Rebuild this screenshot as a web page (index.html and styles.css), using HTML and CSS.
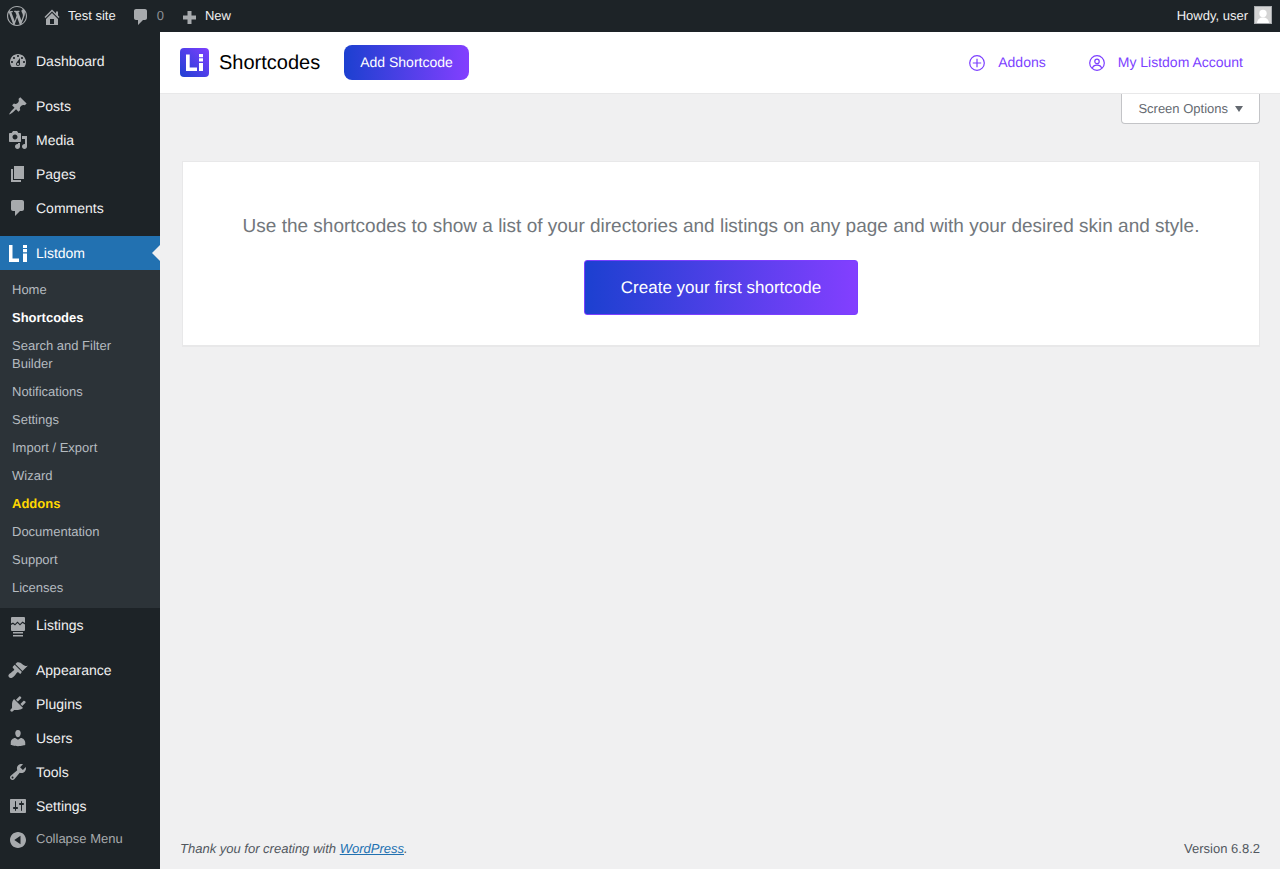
FILE: index.html
```html
<!DOCTYPE html>
<html lang="en">
<head>
<meta charset="utf-8">
<title>Shortcodes</title>
<link rel="stylesheet" href="styles.css">
</head>
<body>
<header class="adminbar">
  <svg class="bar-logo" viewBox="0 0 20 20"><path d="M20 10c0-5.51-4.49-10-10-10C4.48 0 0 4.49 0 10c0 5.52 4.48 10 10 10 5.51 0 10-4.48 10-10zM7.78 15.37L4.37 6.22c.55-.02 1.17-.08 1.17-.08.5-.06.44-1.13-.06-1.11 0 0-1.45.11-2.37.11-.18 0-.37 0-.58-.01C4.12 2.69 6.87 1.11 10 1.11c2.33 0 4.45.87 6.05 2.34-.68-.11-1.65.39-1.65 1.58 0 .74.45 1.36.9 2.1.35.61.55 1.36.55 2.46 0 1.49-1.4 5-1.4 5l-3.03-8.37c.54-.02.82-.17.82-.17.5-.05.44-1.25-.06-1.22 0 0-1.44.12-2.38.12-.87 0-2.33-.12-2.33-.12-.5-.03-.56 1.2-.06 1.22l.92.08 1.26 3.41zM17.41 10c.24-.64.74-1.87.43-4.25.7 1.29 1.05 2.71 1.05 4.25 0 3.29-1.73 6.24-4.4 7.78.97-2.59 1.94-5.2 2.92-7.78zM6.1 18.09C3.12 16.65 1.11 13.53 1.11 10c0-1.3.23-2.48.72-3.59C3.25 10.3 4.67 14.2 6.1 18.09zm4.03-6.63l2.58 6.98c-.86.29-1.76.45-2.71.45-.79 0-1.57-.11-2.29-.33.81-2.38 1.62-4.74 2.42-7.1z"/></svg>
  <a class="bar-item bar-site"><svg class="bar-icon" viewBox="0 0 20 20"><path d="M16 8.5l1.53 1.53-1.06 1.06L10 4.62l-6.47 6.47-1.06-1.06L10 2.5l4 4v-2h2v4zm-6-2.46l6 5.99V18H4v-5.97zM12 17v-5H8v5h4z"/></svg><span>Test site</span></a>
  <a class="bar-item bar-comments"><svg class="bar-icon" viewBox="0 0 20 20"><path d="M5 2h9c1.1 0 2 .9 2 2v7c0 1.1-.9 2-2 2h-2l-5 5v-5H5c-1.1 0-2-.9-2-2V4c0-1.1.9-2 2-2z"/></svg><span class="bar-count">0</span></a>
  <a class="bar-item bar-new"><svg class="bar-icon" viewBox="0 0 20 20"><path d="M2 8.5h4.500V4h4v4.500H15v4h-4.500V17h-4v-4.500H2z"/></svg><span>New</span></a>
  <a class="bar-user"><span>Howdy, user</span>
    <svg class="avatar" viewBox="0 0 18 18"><rect width="18" height="18" fill="#a7aaad"/><rect x="1" y="1" width="16" height="16" fill="#d4d4d4"/><circle cx="9" cy="7.500" r="3.700" fill="#fff"/><path d="M3 17c.5-4 3-5.500 6-5.500s5.500 1.500 6 5.500z" fill="#fff"/></svg>
  </a>
</header>

<div class="layout">
  <nav class="sidebar">
    <a class="menu-item"><span class="mi"><svg viewBox="0 0 20 20"><path d="M3.76 16h12.48c1.100-1.370 1.760-3.110 1.760-5 0-4.420-3.580-8-8-8s-8 3.580-8 8c0 1.890.66 3.630 1.760 5zM10 4c.55 0 1 .45 1 1s-.45 1-1 1-1-.45-1-1 .45-1 1-1zM6 6c.55 0 1 .45 1 1s-.45 1-1 1-1-.45-1-1 .45-1 1-1zm8 0c.55 0 1 .45 1 1s-.45 1-1 1-1-.45-1-1 .45-1 1-1zm-5.370 5.550L12 7v6c0 1.100-.9 2-2 2s-2-.9-2-2c0-.57.24-1.080.63-1.450zM4 10c.55 0 1 .45 1 1s-.45 1-1 1-1-.45-1-1 .45-1 1-1zm12 0c.55 0 1 .45 1 1s-.45 1-1 1-1-.45-1-1 .45-1 1-1zm-5 3c0-.55-.45-1-1-1s-1 .45-1 1 .45 1 1 1 1-.45 1-1z" fill-rule="evenodd"/></svg></span>Dashboard</a>
    <div class="menu-sep"></div>
    <a class="menu-item"><span class="mi"><svg viewBox="0 0 20 20"><path d="M10.44 3.020l1.820-1.820 6.360 6.350-1.830 1.820c-1.050-.68-2.480-.57-3.410.36l-.75.75c-.92.93-1.040 2.350-.35 3.410l-1.830 1.820-2.410-2.410-2.800 2.790c-.42.42-3.380 2.710-3.800 2.290s1.860-3.390 2.280-3.810l2.790-2.790L4.100 9.360l1.830-1.820c1.050.69 2.480.57 3.400-.36l.75-.75c.93-.92 1.050-2.350.36-3.410z"/></svg></span>Posts</a>
    <a class="menu-item"><span class="mi"><svg viewBox="0 0 20 20"><path fill-rule="evenodd" d="M13 11V4c0-.55-.45-1-1-1h-1.670L9 1H5L3.670 3H2c-.55 0-1 .45-1 1v7c0 .55.45 1 1 1h10c.55 0 1-.45 1-1zM7 4.500c1.380 0 2.500 1.120 2.500 2.500S8.380 9.500 7 9.500 4.500 8.380 4.500 7 5.620 4.500 7 4.500zM14 6h5v10.500c0 1.380-1.120 2.500-2.500 2.500S14 17.880 14 16.500s1.120-2.500 2.500-2.500c.17 0 .34.02.5.05V9h-3V6zm-4 8.050V13h2v3.500c0 1.380-1.120 2.500-2.500 2.500S7 17.880 7 16.500 8.120 14 9.500 14c.17 0 .34.02.5.05z"/></svg></span>Media</a>
    <a class="menu-item"><span class="mi"><svg viewBox="0 0 20 20"><path d="M6 15V2h10v13H6zm-1 1h8v2H3V5h2v11z"/></svg></span>Pages</a>
    <a class="menu-item"><span class="mi"><svg viewBox="0 0 20 20"><path d="M5 2h9c1.100 0 2 .9 2 2v7c0 1.100-.9 2-2 2h-2l-5 5v-5H5c-1.100 0-2-.9-2-2V4c0-1.100.9-2 2-2z"/></svg></span>Comments</a>
    <div class="menu-sep"></div>
    <a class="menu-item is-active"><span class="mi"><svg viewBox="0 0 20 20"><path d="M1 2h3.500v13.500H11V19H1zM15 2h4v3h-4zM15 6h4v3.200h-4zM15 10.500h4V19h-4z"/></svg></span>Listdom</a>
    <ul class="submenu">
      <li>Home</li>
      <li class="is-current">Shortcodes</li>
      <li>Search and Filter Builder</li>
      <li>Notifications</li>
      <li>Settings</li>
      <li>Import / Export</li>
      <li>Wizard</li>
      <li class="is-gold">Addons</li>
      <li>Documentation</li>
      <li>Support</li>
      <li>Licenses</li>
    </ul>
    <a class="menu-item"><span class="mi mi-tall"><svg viewBox="0 0 20 20"><path d="M4 2h12a1 1 0 0 1 1 1v5l-2.500-1.500L12 9 9.500 6.500 7 9 5 7.500 3 8.500V3a1 1 0 0 1 1-1zM3 10l2-1 2 1.500L9.500 8l2.500 2.500L14.500 8l2.500 1.500V15a1 1 0 0 1-1 1H4a1 1 0 0 1-1-1zM5 17h10v1.600H5zM5 20h10v1.600H5z"/></svg></span>Listings</a>
    <div class="menu-sep"></div>
    <a class="menu-item"><span class="mi"><svg viewBox="0 0 20 20"><path d="M14.480 11.060L7.410 3.990l1.500-1.500c.5-.56 2.300-.47 3.510.32 1.210.8 1.430 1.280 2.910 2.100 1.180.64 2.450 1.260 4.450.85zm-.71.71L6.700 4.700 4.930 6.470c-.39.39-.39 1.020 0 1.410l1.060 1.060c.39.39.39 1.030 0 1.420-.6.6-1.430 1.110-2.210 1.690-.35.26-.7.53-1.010.84C1.430 13.230.39 14.750.39 15.800c0 1.080 1.190 2.260 2.260 2.260 1.080 0 2.570-1.020 3.920-2.380.31-.31.58-.66.84-1.010.58-.78 1.090-1.610 1.690-2.210.39-.39 1.020-.39 1.410 0l1.060 1.060c.39.39 1.020.39 1.410 0z"/></svg></span>Appearance</a>
    <a class="menu-item"><span class="mi"><svg viewBox="0 0 20 20"><path d="M13.110 4.360L9.870 7.600 8 5.730l3.240-3.240c.35-.34 1.050-.2 1.560.32.52.51.66 1.210.31 1.550zm-8 1.770l.91-1.120 9.010 9.010-1.190.84c-.71.71-2.630 1.160-3.820 1.160H6.140L4.900 17.260c-.59.59-1.540.59-2.120 0-.59-.58-.59-1.530 0-2.120l1.240-1.240v-3.880c0-1.130.4-3.190 1.090-3.890zm7.260 3.970l3.240-3.240c.34-.35 1.040-.21 1.550.31.52.51.66 1.210.31 1.550l-3.240 3.250z"/></svg></span>Plugins</a>
    <a class="menu-item"><span class="mi"><svg viewBox="0 0 20 20"><path d="M10 9.250c-2.270 0-2.730-3.440-2.730-3.440C7 4.020 7.820 2 9.970 2c2.160 0 2.980 2.020 2.710 3.810 0 0-.41 3.440-2.680 3.440zm0 2.570L12.720 10c2.390 0 4.520 2.330 4.520 4.530v2.490s-3.650 1.130-7.240 1.130c-3.650 0-7.240-1.130-7.240-1.130v-2.490c0-2.250 1.940-4.480 4.470-4.480z"/></svg></span>Users</a>
    <a class="menu-item"><span class="mi"><svg viewBox="0 0 20 20"><path fill-rule="evenodd" d="M16.680 9.770c-1.340 1.340-3.300 1.670-4.950.99l-5.410 6.520c-.99.99-2.590.99-3.580 0s-.99-2.590 0-3.570l6.520-5.420c-.68-1.650-.35-3.610.99-4.950 1.280-1.280 3.120-1.620 4.720-1.060l-2.890 2.890 2.820 2.820 2.860-2.870c.53 1.580.18 3.390-1.080 4.650zM3.810 16.210c.4.39 1.040.39 1.430 0 .4-.4.4-1.040 0-1.430-.39-.4-1.030-.4-1.430 0-.39.39-.39 1.030 0 1.430z"/></svg></span>Tools</a>
    <a class="menu-item"><span class="mi"><svg viewBox="0 0 20 20"><path fill-rule="evenodd" d="M18 16V4c0-.55-.45-1-1-1H3c-.55 0-1 .45-1 1v12c0 .55.45 1 1 1h14c.55 0 1-.45 1-1zM8 11h1c.55 0 1 .45 1 1s-.45 1-1 1H8v1.500c0 .28-.22.5-.5.5s-.5-.22-.5-.5V13H6c-.55 0-1-.45-1-1s.45-1 1-1h1V5.500c0-.28.22-.5.5-.5s.5.22.5.5V11zm5-2h-1c-.55 0-1-.45-1-1s.45-1 1-1h1V5.500c0-.28.22-.5.5-.5s.5.22.5.5V7h1c.55 0 1 .45 1 1s-.45 1-1 1h-1v5.500c0 .28-.22.5-.5.5s-.5-.22-.5-.5V9z"/></svg></span>Settings</a>
    <a class="menu-item menu-collapse"><span class="mi"><svg viewBox="0 0 20 20"><path fill-rule="evenodd" d="M10 2c4.420 0 8 3.580 8 8s-3.580 8-8 8-8-3.580-8-8 3.580-8 8-8zm2.500 3.800L6.300 10l6.200 4.200z"/></svg></span>Collapse Menu</a>
  </nav>

  <main class="content">
    <div class="page-header">
      <svg class="brand" viewBox="0 0 29 29">
        <defs><linearGradient id="brand-grad" x1="0" y1="1" x2="1" y2="0"><stop offset="0" stop-color="#1e40d2"/><stop offset="1" stop-color="#7f3fff"/></linearGradient></defs>
        <rect width="29" height="29" rx="4" fill="url(#brand-grad)"/>
        <path d="M6 6.500h3.700v13H17V23H6zM19 6h4v3.300h-4zM19 10.200h4v3.300h-4zM19 15h4v8h-4z" fill="#fff"/>
      </svg>
      <h1 class="page-title">Shortcodes</h1>
      <a class="btn-add">Add Shortcode</a>
      <div class="header-links">
        <a class="header-link"><svg viewBox="0 0 16 16"><circle cx="8" cy="8" r="7.300"/><path d="M8 3.800v8.400M3.800 8h8.400"/></svg><span>Addons</span></a>
        <a class="header-link"><svg viewBox="0 0 16 16"><circle cx="8" cy="8" r="7.300"/><circle cx="8" cy="6.400" r="2.200"/><path d="M3.400 13.200c.6-2.300 2.500-3 4.600-3s4 .7 4.600 3"/></svg><span>My Listdom Account</span></a>
      </div>
    </div>
    <div class="screen-row">
      <a class="screen-options">Screen Options<i class="caret"></i></a>
    </div>
    <section class="card">
      <p class="card-text">Use the shortcodes to show a list of your directories and listings on any page and with your desired skin and style.</p>
      <a class="btn-create">Create your first shortcode</a>
    </section>
    <footer class="footer">
      <span class="thanks">Thank you for creating with <a>WordPress</a>.</span>
      <span>Version 6.8.2</span>
    </footer>
  </main>
</div>
</body>
</html>
```

FILE: styles.css
```css
* { box-sizing: border-box; }
html, body { height: 100%; }
body {
  margin: 0;
  overflow: hidden;
  background: #f0f0f1;
  color: #3c434a;
  font: 13px/1.4 "Liberation Sans", Arial, sans-serif;
  text-rendering: geometricPrecision;
}
a { text-decoration: none; color: inherit; }

/* Admin bar */
.adminbar {
  display: flex;
  align-items: center;
  height: 32px;
  padding: 0 8px 0 7px;
  background: #1d2327;
  color: #f0f0f1;
  fill: #a7aaad;
  line-height: 32px;
}
.bar-logo { width: 20px; height: 20px; flex: none; }
.bar-item { display: flex; align-items: center; }
.bar-icon { width: 20px; height: 20px; flex: none; margin-top: 2px; }
.bar-site { margin-left: 15px; gap: 6px; }
.bar-comments { margin-left: 15px; gap: 6px; }
.bar-count { color: #8c8f94; }
.bar-new { margin-left: 17px; gap: 4px; }
.bar-user { display: flex; align-items: center; gap: 6px; margin-left: auto; }
.avatar { width: 18px; height: 18px; flex: none; margin-top: -2px; }

/* Layout */
.layout { display: flex; height: calc(100% - 32px); }

/* Sidebar */
.sidebar {
  flex: none;
  width: 160px;
  padding-top: 12px;
  background: #1d2327;
  color: #f0f0f1;
}
.menu-item {
  position: relative;
  display: flex;
  align-items: center;
  height: 34px;
  font-size: 14px;
  line-height: 18px;
}
.mi { display: flex; flex: none; width: 36px; padding-left: 8px; }
.mi svg { width: 20px; height: 20px; fill: #a7aaad; }
.mi-tall svg { overflow: visible; }
.menu-sep { height: 11px; }
.is-active { background: #2271b1; color: #fff; }
.is-active .mi svg { fill: #fff; }
.is-active::after {
  content: "";
  position: absolute;
  right: 0;
  top: 9px;
  border: 8px solid transparent;
  border-left: 0;
  border-right-color: #f0f0f1;
}
.submenu {
  margin: 0;
  padding: 6px 0;
  list-style: none;
  background: #2c3338;
  color: #b5bbc0;
  line-height: 18px;
}
.submenu li { padding: 5px 12px; }
.submenu .is-current { color: #fff; font-weight: 700; }
.submenu .is-gold { color: #ffd700; font-weight: 700; }
.menu-collapse { height: 32px; font-size: 13px; color: #a7aaad; }
.menu-collapse svg { margin-top: 2px; }

/* Content */
.content { display: flex; flex: 1; flex-direction: column; min-width: 0; }
.page-header {
  display: flex;
  flex: none;
  align-items: center;
  height: 62px;
  padding: 0 37px 0 20px;
  background: #fff;
  border-bottom: 1px solid #e8e8e9;
}
.brand { flex: none; width: 29px; height: 29px; }
.page-title {
  margin: 0 0 0 10px;
  color: #000;
  font-size: 20px;
  font-weight: 400;
  line-height: 28px;
}
.btn-add {
  margin-left: 24px;
  margin-bottom: 1px;
  padding: 0 16px;
  border-radius: 8px;
  background: linear-gradient(90deg, #1c40d0, #833fff);
  color: #fff;
  font-size: 14px;
  line-height: 35px;
}
.header-links { display: flex; gap: 43px; margin-left: auto; margin-bottom: 2px; }
.header-link {
  display: flex;
  align-items: center;
  gap: 13px;
  color: #7c3fff;
  font-size: 14px;
  line-height: 20px;
}
.header-link svg {
  width: 16px;
  height: 16px;
  margin-top: 2px;
  fill: none;
  stroke: #7c3fff;
  stroke-width: 1.200;
}
.screen-row { display: flex; justify-content: flex-end; padding-right: 20px; }
.screen-options {
  display: flex;
  align-items: center;
  gap: 7px;
  height: 30px;
  padding: 0 16px;
  border: 1px solid #c3c4c7;
  border-top: 0;
  border-radius: 0 0 4px 4px;
  background: #fff;
  color: #646970;
  line-height: 28px;
}
.caret {
  border: 4.500px solid transparent;
  border-top: 6px solid #646970;
  border-bottom: 0;
}
.card {
  display: flex;
  flex-direction: column;
  align-items: center;
  height: 186px;
  margin: 37px 20px 0 22px;
  padding-top: 51px;
  background: #fff;
  border: 1px solid #e8e8e9;
  border-bottom-width: 2px;
}
.card-text {
  margin: 0;
  color: #72777c;
  font-size: 19px;
  line-height: 28px;
}
.btn-create {
  width: 274px;
  margin-top: 19px;
  border: 1px solid #7a3fff;
  border-radius: 3px;
  background: linear-gradient(90deg, #1c40d0, #833fff);
  color: #fff;
  font-size: 17px;
  line-height: 53px;
  text-align: center;
}
.footer {
  display: flex;
  justify-content: space-between;
  margin-top: auto;
  padding: 0 20px 10px;
  color: #50575e;
  line-height: 20px;
}
.thanks { font-style: italic; }
.thanks a { color: #2271b1; text-decoration: underline; }
```
